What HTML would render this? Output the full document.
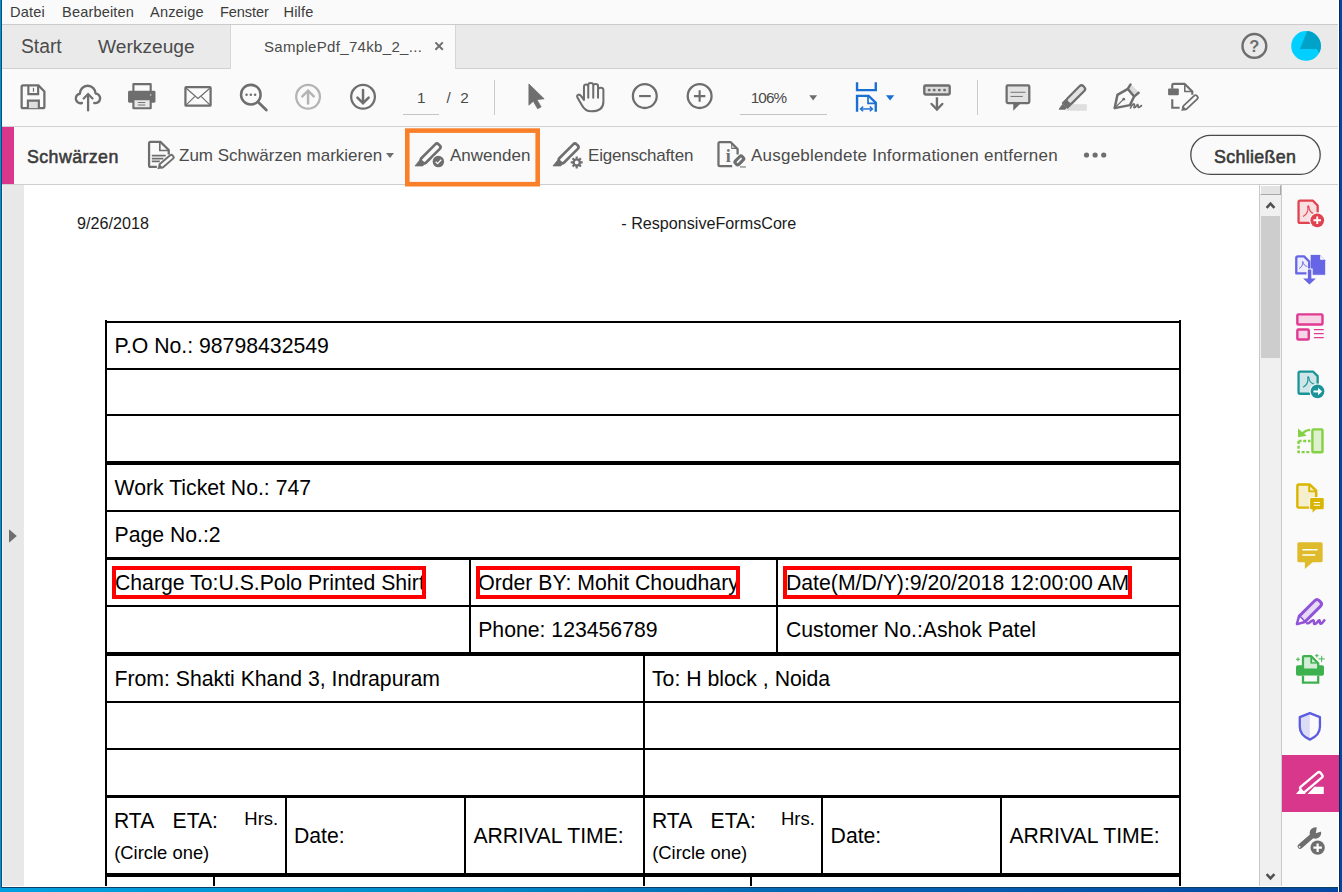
<!DOCTYPE html>
<html lang="de"><head><meta charset="utf-8"><title>SamplePdf</title>
<style>
*{box-sizing:border-box;margin:0;padding:0}
html,body{width:1342px;height:892px;overflow:hidden;background:#fff}
body{position:relative;font-family:"Liberation Sans",sans-serif;color:#4b4b4b}
.abs{position:absolute}
#winL{left:0;top:0;width:2px;height:888px;background:linear-gradient(to right,#0a8fd6 0,#0a8fd6 1px,#0d4f6c 1px,#0d4f6c 2px)}
#winR{left:1338px;top:0;width:4px;height:892px;background:linear-gradient(to right,#fff 0,#fff 1px,#0a2a5e 1px,#0a2a5e 2px,#0645a0 2px)}
#winB{left:0;top:886px;width:1342px;height:6px;background:linear-gradient(to right,#00a0e0,#0090cc 30%,#0566b4 60%,#0548a2)}#winB:before{content:'';position:absolute;left:2px;top:0;width:1337px;height:1px;background:#fff}#winB:after{content:'';position:absolute;left:1px;top:1px;width:1339px;height:1px;background:#0d3f66}
#menubar{left:2px;top:0;width:1336px;height:25px;background:#fafafa;border-bottom:1px solid #cbcbcb}
#menubar span{position:absolute;top:4px;letter-spacing:.15px;font-size:14.6px;line-height:17px;color:#3c3c3c;white-space:nowrap}
#tabbar{left:2px;top:25px;width:1336px;height:44px;background:#eaeaea;border-bottom:1px solid #d0d0d0}
#tab{left:230px;top:25px;width:226px;height:44px;background:#fafafa;border-left:1px solid #d6d6d6;border-right:1px solid #d6d6d6}
.tabtxt{position:absolute;white-space:nowrap;color:#4b4b4b}
#toolbar{left:2px;top:69px;width:1336px;height:58px;background:#fafafa;border-bottom:1px solid #d0d0d0}
#redbar{left:2px;top:127px;width:1336px;height:58px;background:#fafafa;border-bottom:1px solid #cfcfcf}
#pink{left:2px;top:127px;width:12px;height:57px;background:#d8378c}
.rt{position:absolute;white-space:nowrap;color:#4b4b4b;font-size:17px;line-height:20px;top:146.3px}
#docbg{left:2px;top:185px;width:22px;height:701px;background:#e8e8e8}
#page{left:24px;top:185px;width:1235px;height:701px;background:#fff}
#scroll{left:1259px;top:185px;width:23px;height:701px;background:#f0f0f0;border-left:1px solid #c9c9c9;border-right:1px solid #c9c9c9}#split{left:1260px;top:185px;width:21px;height:10px;background:#e3e3e3;border-top:1px solid #fff;border-left:1px solid #fff;border-right:1px solid #a8a8a8;border-bottom:1px solid #a8a8a8}
#thumb{left:1261px;top:216px;width:19px;height:142px;background:#cdcdcd}
#rpanel{left:1282px;top:185px;width:56px;height:701px;background:#fafafa}
#ractive{left:1282px;top:755px;width:57px;height:57px;background:#d8378c}
.ln{position:absolute;background:#000}
.dt{position:absolute;white-space:nowrap;color:#000;font-size:20px;line-height:24px;transform:scaleY(1.04);transform-origin:0 0}
.rb{position:absolute;border:4px solid #ff0000}
</style></head><body>
<div id="menubar" class="abs">
<span style="left:8px">Datei</span><span style="left:60px">Bearbeiten</span><span style="left:148px">Anzeige</span><span style="left:218px;letter-spacing:-.1px">Fenster</span><span style="left:281.5px">Hilfe</span>
</div>
<div id="tabbar" class="abs"></div>
<div id="tab" class="abs"></div>
<div class="tabtxt" style="left:21px;top:36px;font-size:19.3px;line-height:22px">Start</div>
<div class="tabtxt" style="left:98px;top:36px;font-size:19.2px;line-height:22px">Werkzeuge</div>
<div class="tabtxt" style="left:264px;top:38px;font-size:15px;line-height:18px;letter-spacing:.32px">SamplePdf_74kb_2_...</div>
<div id="toolbar" class="abs"></div>
<div id="redbar" class="abs"></div>
<div id="pink" class="abs"></div>
<div class="rt" style="left:27px;top:146.7px;font-size:17.8px;letter-spacing:.42px;color:#3a3a3a;-webkit-text-stroke:.55px #3a3a3a">Schwärzen</div>
<div class="rt" style="left:179px">Zum Schwärzen markieren</div>
<div class="rt" style="left:450px">Anwenden</div>
<div class="rt" style="left:588px;letter-spacing:-.2px">Eigenschaften</div>
<div class="rt" style="left:751px;letter-spacing:.22px">Ausgeblendete Informationen entfernen</div>
<div class="rt" style="left:1214px;top:146.7px;font-size:17.8px;letter-spacing:.35px;color:#3a3a3a;-webkit-text-stroke:.6px #3a3a3a">Schließen</div>
<div id="docbg" class="abs"></div>
<div id="page" class="abs"></div>
<div id="scroll" class="abs"></div>
<div id="thumb" class="abs"></div><div id="split" class="abs"></div>
<div id="rpanel" class="abs"></div>
<div id="ractive" class="abs"></div>
<!-- document -->
<div class="ln" style="left:105px;top:321px;width:1076px;height:2px"></div>
<div class="ln" style="left:105px;top:368px;width:1076px;height:2px"></div>
<div class="ln" style="left:105px;top:414px;width:1076px;height:2px"></div>
<div class="ln" style="left:105px;top:461px;width:1076px;height:4px"></div>
<div class="ln" style="left:105px;top:510px;width:1076px;height:2px"></div>
<div class="ln" style="left:105px;top:557px;width:1076px;height:3px"></div>
<div class="ln" style="left:105px;top:605px;width:1076px;height:2px"></div>
<div class="ln" style="left:105px;top:652px;width:1076px;height:4px"></div>
<div class="ln" style="left:105px;top:701px;width:1076px;height:2px"></div>
<div class="ln" style="left:105px;top:748px;width:1076px;height:2px"></div>
<div class="ln" style="left:105px;top:795px;width:1076px;height:3px"></div>
<div class="ln" style="left:105px;top:873px;width:1076px;height:4px"></div>
<div class="ln" style="left:105px;top:320px;width:2px;height:566px"></div>
<div class="ln" style="left:1179px;top:320px;width:2px;height:566px"></div>
<div class="ln" style="left:469px;top:557px;width:2px;height:95px"></div>
<div class="ln" style="left:776px;top:557px;width:2px;height:95px"></div>
<div class="ln" style="left:643px;top:652px;width:2px;height:234px"></div>
<div class="ln" style="left:285px;top:795px;width:2px;height:78px"></div>
<div class="ln" style="left:464px;top:795px;width:2px;height:78px"></div>
<div class="ln" style="left:821px;top:795px;width:2px;height:78px"></div>
<div class="ln" style="left:1000px;top:795px;width:2px;height:78px"></div>
<div class="ln" style="left:213px;top:873px;width:2px;height:13px"></div>
<div class="ln" style="left:750px;top:873px;width:2px;height:13px"></div>
<div class="dt" style="left:77.1px;top:209.80px;font-size:16.15px;color:#1a1a1a;">9/26/2018</div>
<div class="dt" style="left:621.3px;top:209.80px;font-size:16.15px;color:#1a1a1a;">- ResponsiveFormsCore</div>
<div class="dt" style="left:114.5px;top:333.07px;font-size:21.23px;">P.O No.: 98798432549</div>
<div class="dt" style="left:114.5px;top:475.07px;font-size:21.23px;">Work Ticket No.: 747</div>
<div class="dt" style="left:114.5px;top:522.07px;font-size:21.23px;">Page No.:2</div>
<div class="dt" style="left:115px;top:569.77px;font-size:21.23px;">Charge To:U.S.Polo Printed Shirt</div>
<div class="dt" style="left:478.2px;top:569.77px;font-size:21.23px;">Order BY: Mohit Choudhary</div>
<div class="dt" style="left:786px;top:569.77px;font-size:21.23px;">Date(M/D/Y):9/20/2018 12:00:00 AM</div>
<div class="dt" style="left:478.2px;top:617.27px;font-size:21.23px;">Phone: 123456789</div>
<div class="dt" style="left:786px;top:617.27px;font-size:21.23px;">Customer No.:Ashok Patel</div>
<div class="dt" style="left:114.5px;top:665.77px;font-size:21.23px;">From: Shakti Khand 3, Indrapuram</div>
<div class="dt" style="left:652px;top:665.77px;font-size:21.23px;">To: H block , Noida</div>
<div class="dt" style="left:114.0px;top:808.22px;font-size:21.1px;">RTA</div>
<div class="dt" style="left:172.6px;top:808.22px;font-size:21.1px;">ETA:</div>
<div class="dt" style="left:244.3px;top:805.75px;font-size:18.5px;">Hrs.</div>
<div class="dt" style="left:114.2px;top:840.49px;font-size:18.4px;">(Circle one)</div>
<div class="dt" style="left:294.0px;top:822.78px;font-size:21.2px;">Date:</div>
<div class="dt" style="left:473.4px;top:822.78px;font-size:21.2px;">ARRIVAL TIME:</div>
<div class="dt" style="left:652.0px;top:808.22px;font-size:21.1px;">RTA</div>
<div class="dt" style="left:710.6px;top:808.22px;font-size:21.1px;">ETA:</div>
<div class="dt" style="left:781.0px;top:805.75px;font-size:18.5px;">Hrs.</div>
<div class="dt" style="left:652.2px;top:840.49px;font-size:18.4px;">(Circle one)</div>
<div class="dt" style="left:830.6px;top:822.78px;font-size:21.2px;">Date:</div>
<div class="dt" style="left:1009.4px;top:822.78px;font-size:21.2px;">ARRIVAL TIME:</div>
<div class="rb" style="left:112px;top:566px;width:314px;height:33px"></div>
<div class="rb" style="left:476px;top:566px;width:264px;height:33px"></div>
<div class="rb" style="left:783px;top:566px;width:349px;height:33px"></div>

<svg class="abs" style="left:0;top:0" width="1342" height="892" viewBox="0 0 1342 892" fill="none" stroke-linecap="butt" stroke-linejoin="round">
<g stroke="#6e6e6e" fill="none">
<!-- region A [10,72] : save, cloud, printer -->
<g transform="translate(10,72) scale(0.119225)">
 <path d="M97.5,125 Q97.5,112.5 110,112.5 H238 L288.5,163 V291 Q288.5,303.5 276,303.5 H110 Q97.5,303.5 97.5,291 Z" stroke-width="19"/>
 <path d="M154,113 V186 H236 V113" stroke-width="18" stroke-linejoin="miter"/>
 <path d="M197,133 V166" stroke-width="10"/>
 <path d="M150,303 V240 H242 V303" stroke-width="18" fill="#dedede" stroke-linejoin="miter"/>
 <path d="M603,260 A40,40 0 1 1 586,182 A66,66 0 0 1 718,181 A40,40 0 1 1 707,260" stroke-width="20" stroke-linecap="round"/>
 <path d="M655,195 V322" stroke-width="19" stroke-linecap="round"/>
 <path d="M618,222 L655,185 L692,222" stroke-width="19" stroke-linecap="round" stroke-linejoin="miter"/>
 <path d="M1035,160 V102 H1180 V160" stroke-width="18"/>
 <rect x="990" y="158" width="230" height="100" rx="12" fill="#6e6e6e" stroke="none"/>
 <rect x="1035" y="228" width="145" height="76" stroke-width="18" fill="#e8e8e8"/>
 <path d="M1072,256 H1135 M1072,277 H1135" stroke-width="8"/>
 <circle cx="1180" cy="192" r="6" fill="#fafafa" stroke="none"/>
</g>
<!-- region B [170,72] : envelope, magnifier, up -->
<g transform="translate(170,72) scale(0.119225)">
 <rect x="129.5" y="127.5" width="211" height="155" rx="6" stroke-width="19"/>
 <path d="M136,136 L235,222 L334,136 M136,276 L207,206 M334,276 L263,206" stroke-width="10"/>
 <circle cx="678" cy="190" r="82" stroke-width="21"/>
 <path d="M745,258 L808,318" stroke-width="24" stroke-linecap="round"/>
 <g fill="#6e6e6e" stroke="none"><circle cx="642" cy="190" r="10.5"/><circle cx="678" cy="190" r="10.5"/><circle cx="714" cy="190" r="10.5"/></g>
 <g stroke="#b4b4b4"><circle cx="1158" cy="208" r="99.5" stroke-width="19"/>
 <path d="M1158,160 V265" stroke-width="21" stroke-linecap="round"/><path d="M1110,205 L1158,157 L1206,205" stroke-width="21" stroke-linecap="round" stroke-linejoin="miter"/></g>
</g>
<!-- region C [330,72] : down -->
<g transform="translate(330,72) scale(0.119225)">
 <circle cx="277" cy="208" r="99.5" stroke-width="19"/>
 <path d="M277,150 V258" stroke-width="21" stroke-linecap="round"/><path d="M230,215 L277,262 L324,215" stroke-width="21" stroke-linecap="round" stroke-linejoin="miter"/>
</g>
<!-- region D [480,72] : pointer, hand -->
<g transform="translate(480,72) scale(0.119225)">
 <polygon points="410,100 410,278 447,246 483,308 513,293 478,232 538,225" fill="#6e6e6e" stroke="#6e6e6e" stroke-width="6"/>
 <path d="M872,235 V125 Q872,105 890,105 Q908,105 908,125 M908,215 V110 Q908,92 929,92 Q950,92 950,110 V215 M950,115 Q950,100 970,100 Q990,100 990,118 V215 M990,150 Q990,132 1012,132 Q1035,132 1035,152 V250 Q1035,330 935,330 Q880,330 850,270 L818,215 Q808,195 825,190 Q838,188 850,205 L872,235" stroke-width="17" stroke-linecap="round"/>
</g>
<!-- region E [620,72] : minus, plus -->
<g transform="translate(620,72) scale(0.119225)">
 <circle cx="208" cy="202" r="100" stroke-width="19"/><path d="M160,202 H258" stroke-width="18"/>
 <circle cx="668" cy="202" r="100" stroke-width="19"/><path d="M620,202 H716 M668,154 V250" stroke-width="18"/>
</g>
<!-- region F [730,72] : dropdown -->
<g transform="translate(730,72) scale(0.119225)">
 <polygon points="665,195 730,195 697.5,238" fill="#6e6e6e" stroke="none"/>
</g>
<!-- region G [840,72] : fit, dd, keyboard -->
<g transform="translate(840,72) scale(0.119225)">
 <g stroke="#1a6fd2" stroke-linejoin="miter"><path d="M143,85 V152 H300 V85" stroke-width="20"/>
 <path d="M143,333 V200 H240 L300,258 V333" stroke-width="20"/>
 <path d="M235,205 V263 H295" stroke-width="14"/>
 <path d="M176,310 H268" stroke-width="12"/><path d="M194,290 L172,310 L194,330 M250,290 L272,310 L250,330" stroke-width="12"/>
 <polygon points="385,195 455,195 420,238" fill="#1a6fd2" stroke="none"/></g>
 <rect x="707" y="113" width="213" height="76" rx="10" stroke-width="20" fill="#dcdcdc"/>
 <g fill="#6e6e6e" stroke="none"><circle cx="748" cy="152" r="12.5"/><circle cx="790" cy="152" r="12.5"/><circle cx="833" cy="152" r="12.5"/><circle cx="877" cy="152" r="12.5"/></g>
 <path d="M813,212 V312" stroke-width="20"/><path d="M768,268 L813,315 L858,268" stroke-width="20" stroke-linecap="round" stroke-linejoin="miter"/>
</g>
<!-- region H [990,72] : comment, highlighter -->
<g transform="translate(990,72) scale(0.119225)">
 <polygon points="195,262 195,325 258,262" fill="#6e6e6e" stroke="none"/>
 <rect x="139.5" y="112.5" width="190" height="148" rx="10" stroke-width="19" fill="#e2e2e2"/>
 <path d="M172,170 H298 M172,205 H275" stroke-width="8"/>
 <rect x="640" y="270" width="172" height="55" fill="#dedede" stroke="none"/>
 <g transform="translate(655,255) rotate(-45)"><rect x="-5" y="-28" width="192" height="56" rx="24" stroke-width="19" fill="#e2e2e2"/><rect x="-42" y="-36" width="50" height="72" rx="6" fill="#6e6e6e" stroke="none"/></g>
 <polygon points="580,312 632,312 640,296 608,272" fill="#6e6e6e" stroke="#6e6e6e" stroke-width="8"/>
</g>
<!-- region I [1090,72] : sign, redact doc -->
<g transform="translate(1090,72) scale(0.119225)">
 <path d="M318,140 L342,100 L410,170 L372,205 Z" stroke="none" fill="#dcdcdc"/><path d="M318,140 L340,104 M372,205 L408,174" stroke-width="20" stroke-linecap="round"/>
 <path d="M207,303 L230,192 L318,142 L370,205 L335,278 Z" stroke-width="21" fill="#fafafa"/>
 <path d="M212,298 L280,230" stroke-width="10"/><circle cx="283" cy="228" r="12" fill="#6e6e6e" stroke="none"/>
 <path d="M340,302 C350,280 365,262 372,270 C378,280 362,300 372,300 C385,298 392,275 400,272 C408,275 398,298 408,298 C418,296 425,285 432,282" stroke-width="14" stroke-linecap="round"/>
 <path d="M690,140 V112 Q690,100 702,100 H795 L858,163 V190" stroke-width="18"/>
 <path d="M795,102 V163 H856" stroke-width="13"/>
 <rect x="655" y="138" width="90" height="57" rx="8" fill="#6e6e6e" stroke="none"/>
 <path d="M690,228 V300 H752" stroke-width="18" stroke-linejoin="miter"/>
 <g transform="translate(768,324) rotate(-43)"><rect x="28" y="-19" width="150" height="38" rx="14" stroke-width="15" fill="#fafafa"/><path d="M28,-19 V19" stroke-width="10"/><polygon points="2,0 30,-17 30,17" fill="#6e6e6e" stroke="#6e6e6e" stroke-width="6"/></g>
</g>
</g>
</svg>

<svg class="abs" style="left:0;top:0" width="1342" height="892" viewBox="0 0 1342 892" fill="none" stroke-linejoin="round">
<g stroke="#6e6e6e" fill="none">
<!-- [130,130] doc-mark -->
<g transform="translate(130,130) scale(0.119225)">
 <path d="M325,205 V168 L255,100 H172 Q160,100 160,112 V298 Q160,310 172,310 H225" stroke-width="19"/>
 <path d="M250,102 V172 H322" stroke-width="14"/>
 <path d="M183,215 H300 M183,240 H280 M183,263 H250" stroke-width="13"/>
 <g transform="translate(232,326) rotate(-40.7)"><rect x="30" y="-19" width="138" height="38" rx="14" stroke-width="16" fill="#fafafa"/><polygon points="2,0 32,-17 32,17" fill="#6e6e6e" stroke="#6e6e6e" stroke-width="6"/></g>
</g>
<!-- [400,130] apply -->
<g transform="translate(400,130) scale(0.119225)">
 <g transform="translate(186,268) rotate(-45)"><rect x="0" y="-27" width="202" height="54" rx="20" stroke-width="22" fill="#fafafa"/></g>
 <polygon points="126,301 192,301 204,282 168,250" fill="#6e6e6e" stroke="#6e6e6e" stroke-width="7"/>
 <circle cx="322" cy="265" r="57" fill="#fafafa" stroke="none"/>
 <circle cx="322" cy="265" r="48" fill="#6e6e6e" stroke="none"/>
 <path d="M299,266 L315,282 L346,250" stroke="#fafafa" stroke-width="11"/>
</g>
<!-- [540,130] properties -->
<g transform="translate(540,130) scale(0.119225)">
 <g transform="translate(169,268) rotate(-45)"><rect x="0" y="-27" width="202" height="54" rx="20" stroke-width="22" fill="#fafafa"/></g>
 <polygon points="109,301 175,301 187,282 151,250" fill="#6e6e6e" stroke="#6e6e6e" stroke-width="7"/>
 <circle cx="308" cy="272" r="60" fill="#fafafa" stroke="none"/>
 <circle cx="308" cy="272" r="26" stroke-width="20"/>
 <g stroke-width="18"><path d="M308,222 V242 M308,302 V322 M258,272 H278 M338,272 H358 M273,237 L287,251 M329,293 L343,307 M343,237 L329,251 M287,293 L273,307"/></g>
</g>
<!-- [700,130] hidden info -->
<g transform="translate(700,130) scale(0.119225)">
 <path d="M315.5,205 V160 L258,102.5 H167 Q155,102.5 155,114 V291 Q155,302.5 167,302.5 H270" stroke-width="19"/>
 <path d="M266,118 V154 H302" stroke-width="9"/>
 <text x="236" y="270" font-family="Liberation Serif, serif" font-weight="bold" font-size="150" fill="#6e6e6e" stroke="none" text-anchor="middle">i</text>
 <g transform="translate(330,255) rotate(-45)"><rect x="-52" y="-30" width="104" height="60" rx="18" fill="#fafafa" stroke="none"/><rect x="-40" y="-20" width="80" height="40" rx="14" stroke-width="26" fill="#fafafa"/></g>
 <path d="M335,310 H385" stroke-width="9"/>
</g>
<!-- dots -->
<g fill="#6e6e6e" stroke="none"><circle cx="1086.5" cy="155" r="2.6"/><circle cx="1095.1" cy="155" r="2.6"/><circle cx="1103.7" cy="155" r="2.6"/></g>
<polygon points="386,153 394,153 390,158" fill="#6e6e6e" stroke="none"/>
</g>
<rect x="407.3" y="130.6" width="130.4" height="53.6" stroke="#fa7f29" stroke-width="4.6" fill="none" stroke-linejoin="miter"/>
<rect x="1190.8" y="135.3" width="129.4" height="39" rx="19.5" stroke="#4b4b4b" stroke-width="1.3" fill="none"/>
</svg>

<svg class="abs" style="left:0;top:0" width="1342" height="892" viewBox="0 0 1342 892" fill="none" stroke-linejoin="round">
<!-- [1250,184] s=7.435 : scroll up chevron, create pdf, combine -->
<g transform="translate(1250,184) scale(0.1345)">
 <path d="M123.4,177 L152.4,145.8 L181.4,177" stroke="#505050" stroke-width="19" stroke-linejoin="miter"/>
 <g stroke="#e0434f">
  <path d="M503,230 V160 L468,124 H372 Q361,124 361,135 V278 Q361,289 372,289 H450" stroke-width="17" fill="#f9dfe1"/>
  <path d="M395,242 C420,228 434,200 430,168 C428,160 438,160 438,170 C440,200 458,218 482,224" stroke-width="8"/>
  <circle cx="500" cy="270" r="60" fill="#fafafa" stroke="none"/>
  <circle cx="500" cy="270" r="51" fill="#e0434f" stroke="none"/>
  <path d="M472,270 H528 M500,242 V298" stroke="#fff" stroke-width="14"/>
 </g>
 <g stroke="#6565e6">
  <path d="M452,528 H520 L558,566 V675 H452 Z" fill="#6565e6" stroke-width="2"/>
  <path d="M522,530 V564 H556 Z" fill="#fafafa" stroke="none"/>
  <path d="M344,550 Q344,538 356,538 H402 L440,576 V665 H344 Z" stroke-width="17" fill="#ececfb"/>
  <path d="M366,628 C384,618 395,598 392,576 C396,598 410,610 426,614" stroke-width="7"/>
  <path d="M420,628 H466 V696 H505 L442,756 L380,696 H420 Z" fill="#fafafa" stroke="none"/>
  <path d="M430,636 H456 V702 H490 L442,748 L395,702 H430 Z" fill="#6565e6" stroke="none"/>
 </g>
</g>
<!-- [1250,300] : organize, export -->
<g transform="translate(1250,300) scale(0.1345)">
 <g stroke="#e03a92">
  <rect x="352" y="107" width="187" height="75" rx="8" stroke-width="18" fill="#f6d5e7"/>
  <rect x="352" y="219" width="85" height="75" rx="8" stroke-width="18" fill="#f6d5e7"/>
  <path d="M475,221 H548 M475,250 H548 M475,279 H548" stroke-width="9"/>
 </g>
 <g stroke="#1a9498">
  <path d="M503,640 V566 L468,532 H372 Q361,532 361,543 V686 Q361,697 372,697 H450" stroke-width="17" fill="#cfe5e7"/>
  <path d="M395,648 C420,634 434,606 430,576 C428,568 438,568 438,578 C440,606 458,622 482,628" stroke-width="8"/>
  <circle cx="502" cy="680" r="60" fill="#fafafa" stroke="none"/>
  <circle cx="502" cy="680" r="51" fill="#1a9498" stroke="none"/>
  <path d="M472,680 H515" stroke="#fff" stroke-width="15"/><polygon points="506,652 536,680 506,708" fill="#fff" stroke="none"/>
 </g>
</g>
<!-- [1250,410] : rotate, doc comment -->
<g transform="translate(1250,410) scale(0.1345)">
 <g stroke="#84d146">
  <rect x="464" y="144" width="75" height="170" rx="8" stroke-width="18" fill="#dff0ce"/>
  <path d="M361,231 H450 M361,231 V313 H450" stroke-width="18" stroke-dasharray="22 13" stroke-linejoin="miter"/>
  <polygon points="357,138 357,202 422,192" fill="#84d146" stroke="none"/>
  <path d="M388,178 Q410,150 447,147" stroke-width="17"/>
 </g>
 <g stroke="#d9b500">
  <path d="M492,650 V600 L445,554 H364 Q352,554 352,566 V714 Q352,726 364,726 H450" stroke-width="18" fill="#f5efcd"/>
  <path d="M440,556 V605 H490" stroke-width="14"/>
  <rect x="440" y="648" width="115" height="97" rx="10" fill="#fafafa" stroke="none"/>
  <polygon points="465,735 465,764 494,735" fill="#d9b500" stroke="none"/>
  <rect x="447" y="655" width="101" height="83" rx="8" fill="#d9b500" stroke="none"/>
  <path d="M474,688 H521 M474,708 H521" stroke="#fff" stroke-width="8"/>
 </g>
</g>
<!-- [1250,520] : comment, sign -->
<g transform="translate(1250,520) scale(0.1345)">
 <rect x="352" y="165" width="188" height="150" rx="12" fill="#dfbb2c"/>
 <polygon points="408,312 408,364 467,312" fill="#dfbb2c"/>
 <path d="M390,222 H502 M390,260 H485" stroke="#fff" stroke-width="11"/>
 <g stroke="#9153d8">
  <g transform="translate(345,778) rotate(-45)"><path d="M60,-30 H222 Q246,-30 246,-7 V7 Q246,30 222,30 H60 L8,0 Z" stroke-width="22" fill="#e6daf6"/><path d="M62,-30 V30" stroke-width="13" stroke="#9153d8"/><path d="M56,-18 L22,0 L56,18 Z" fill="#fafafa" stroke="none"/></g>
  <path d="M425,768 C445,770 458,742 470,745 C482,752 468,776 484,773 C500,768 505,745 515,745 C523,750 514,773 528,771 C540,767 546,752 553,746" stroke-width="19" stroke-linecap="round"/>
 </g>
</g>
<!-- [1250,630] : print enhance, shield -->
<g transform="translate(1250,630) scale(0.1345)">
 <g stroke="#3db14d">
  <path d="M394,275 V205 Q394,195 404,195 H455 L507,247 V275" stroke-width="17" fill="#d4edd8"/>
  <path d="M455,197 V247 H505" stroke-width="13"/>
  <rect x="342" y="262" width="208" height="78" rx="14" fill="#3db14d" stroke="none"/>
  <rect x="402.5" y="250" width="96" height="36" fill="#d4edd8" stroke="none"/>
  <path d="M394,340 V392 H507 V340" stroke-width="17" stroke-linejoin="miter" fill="#fafafa"/>
  <path d="M357,203 V233 M342,218 H372 M497,178 V204 M484,191 H510 M533,192 V238 M510,215 H556" stroke-width="7"/>
 </g>
 <g stroke="#5c5ce0">
  <path d="M445,618 L370,648 V720 C370,770 410,800 445,815 Z" fill="#dcdcf6" stroke="none"/>
  <path d="M445,618 L520,648 V720 C520,770 480,800 445,815 C410,800 370,770 370,720 V648 Z" stroke-width="17"/>
 </g>
</g>
<!-- [1250,740] s=5.87 : redact active, wrench, chevron -->
<g transform="translate(1250,740) scale(0.17036)">
 <g transform="translate(302,296) rotate(-40)"><rect x="0" y="-19" width="152" height="38" rx="12" stroke="#fff" stroke-width="14" fill="#d8378c"/></g>
 <polygon points="270,317 296,286 328,317" fill="#fff"/>
 <polygon points="338,317 378,275 433,275 433,317" fill="#fff"/>
 <g stroke="#6e6e6e">
  <path d="M294,624 L370,558" stroke-width="30" stroke-linecap="round"/>
  <circle cx="384" cy="546" r="34" fill="#6e6e6e" stroke="none"/>
  <polygon points="386,548 396,496 446,528" fill="#fafafa" stroke="none"/>
  <circle cx="291" cy="627" r="5.5" fill="#fafafa" stroke="none"/>
  <circle cx="397" cy="632" r="51" fill="#fafafa" stroke="none"/>
  <circle cx="397" cy="632" r="42" fill="#6e6e6e" stroke="none"/>
  <path d="M372,632 H422 M397,607 V657" stroke="#fff" stroke-width="13"/>
 </g>
</g>
<path d="M1266.6,874.1 L1270.5,878.3 L1274.4,874.1" stroke="#505050" stroke-width="2.55" stroke-linejoin="miter"/>
</svg>

<svg class="abs" style="left:0;top:0" width="1342" height="892" viewBox="0 0 1342 892" fill="none">
<g transform="translate(1222,20) scale(0.08942)">
 <circle cx="362" cy="290" r="133" stroke="#6e6e6e" stroke-width="27"/>
 <clipPath id="avc"><circle cx="940" cy="290" r="166"/></clipPath>
 <circle cx="940" cy="290" r="166" fill="#00cfff"/>
 <polygon points="955,118 872,325 1062,325 1085,372 1130,300 1130,118" fill="#00a2c7" clip-path="url(#avc)"/>
</g>
<text x="1254.4" y="51.6" text-anchor="middle" font-family="Liberation Sans, sans-serif" font-weight="bold" font-size="16.5" fill="#6e6e6e">?</text>
<path d="M435.4,42.4 L442.8,49.8 M442.8,42.4 L435.4,49.8" stroke="#6e6e6e" stroke-width="2"/>
<polygon points="9,529.2 9,542.8 16.8,536" fill="#6e6e6e"/>
</svg>
<div class="abs" style="left:494px;top:80px;width:1px;height:35px;background:#c9c9c9"></div>
<div class="abs" style="left:977px;top:80px;width:1px;height:35px;background:#c9c9c9"></div>
<div class="abs" style="left:403px;top:114px;width:36px;height:1px;background:#c4c4c4"></div>
<div class="abs" style="left:740px;top:114px;width:87px;height:1px;background:#c4c4c4"></div>
<div class="tabtxt" style="left:417px;top:88.5px;font-size:15.3px;line-height:18px">1</div>
<div class="tabtxt" style="left:446.5px;top:88.5px;font-size:15.3px;line-height:18px">/</div>
<div class="tabtxt" style="left:460.3px;top:88.5px;font-size:15.3px;line-height:18px">2</div>
<div class="tabtxt" style="left:750.7px;top:88.5px;font-size:15.3px;line-height:18px;letter-spacing:-.9px">106%</div>
<div class="abs" style="left:2px;top:185px;width:1px;height:701px;background:#f6f2f0"></div>

<div id="winB" class="abs"></div><div id="winL" class="abs"></div><div id="winR" class="abs"></div><div class="abs" style="left:1338px;top:755px;width:1px;height:57px;background:#d8378c"></div>
</body></html>
